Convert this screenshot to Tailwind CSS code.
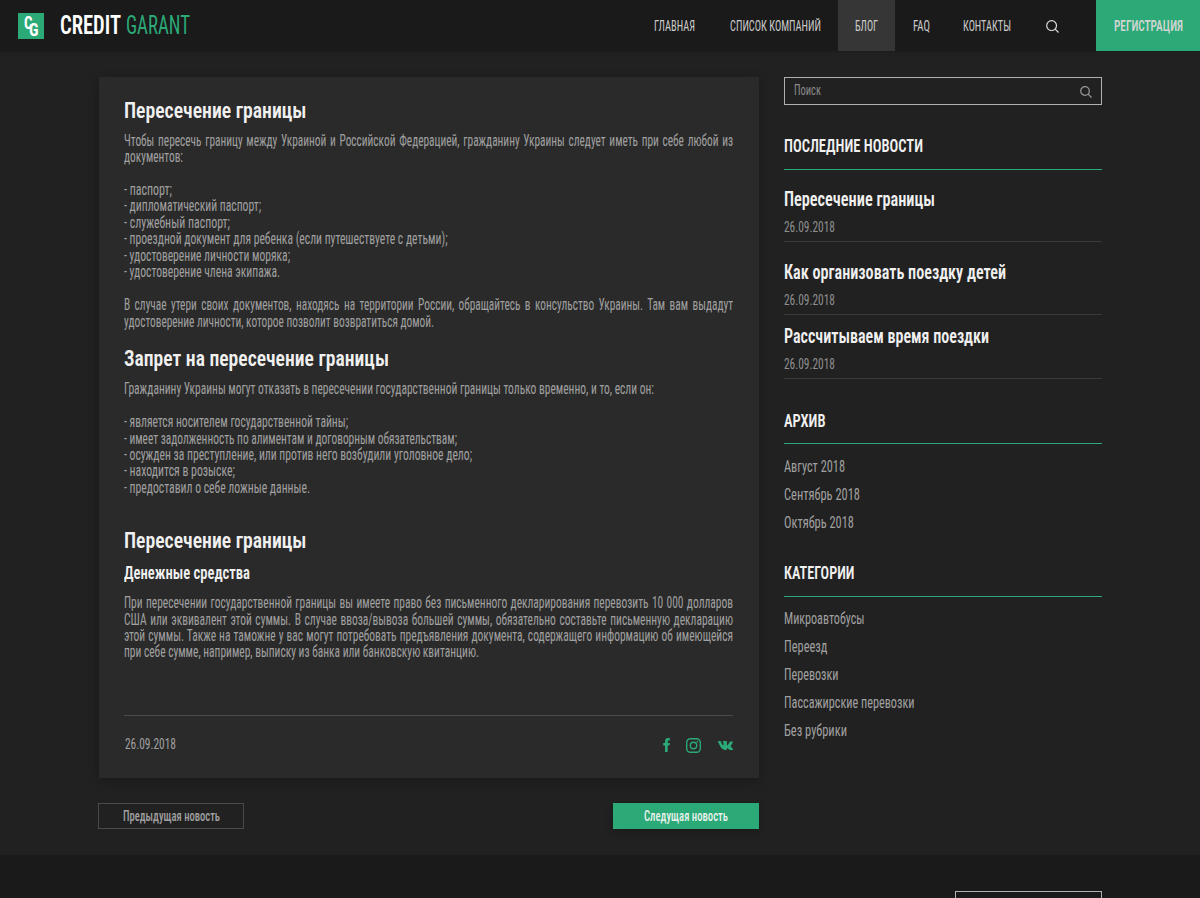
<!DOCTYPE html>
<html lang="ru">
<head>
<meta charset="utf-8">
<title>Credit Garant</title>
<script src="https://cdn.jsdelivr.net/npm/@tailwindcss/browser@4"></script>
</head>
<body class="bg-[#212121] font-['Roboto','Open_Sans',sans-serif] font-stretch-[75%] text-[#a0a0a0] overflow-hidden h-[898px]">
<header class="h-[51px] bg-[#1a1a1a] flex items-center shadow-[0_0_4px_rgba(0,0,0,0.25)]">
  <div class="relative ml-[18px] size-[26px] bg-[#2ba977] text-white font-bold text-[18px] leading-[13px]">
    <div data-fit class="absolute left-[6px] top-[3px] w-[8.5px]">C</div>
    <div data-fit class="absolute left-[11px] top-[10px] w-[9.5px]">G</div>
  </div>
  <div data-fit class="ml-[16px] mb-px w-[61px] text-[25.5px] leading-[50px] font-semibold text-white">CREDIT</div>
  <div data-fit class="ml-[5px] mb-px w-[64px] text-[25.5px] leading-[50px] font-[380] text-[#2ba977]">GARANT</div>
  <nav class="ml-auto h-full flex items-center text-[15.5px] leading-[52px] text-[#cacaca]">
    <a data-fit class="w-[41px]">ГЛАВНАЯ</a>
    <a data-fit class="ml-[35px] w-[91px]">СПИСОК КОМПАНИЙ</a>
    <div class="ml-[17px] h-full w-[57px] px-[17px] bg-[#363636]"><a data-fit class="block w-[23px]">БЛОГ</a></div>
    <a data-fit class="ml-[17.5px] w-[17px]">FAQ</a>
    <a data-fit class="ml-[33.5px] w-[48px]">КОНТАКТЫ</a>
    <svg class="ml-[35px] mt-[2px] size-[13px]" viewBox="0 0 13 13" fill="none" stroke="#dcdcdc" stroke-width="1.2"><circle cx="5.6" cy="5.6" r="4.9"/><path d="M9.2 9.2 12.5 12.5"/></svg>
    <div class="ml-[37px] h-full w-[104px] px-[17.5px] bg-[#2ba977]"><a data-fit class="block w-[69px] font-semibold text-[#cfd5d2]">РЕГИСТРАЦИЯ</a></div>
  </nav>
</header>

<div class="flex h-[804px] pl-[98px] pt-[26px]">
  <main class="w-[661px]">
    <article class="ml-px w-[660px] h-[701px] bg-[#2a2a2a] pl-[25px] pr-[26px] pt-[19.1px] shadow-[0_3px_10px_rgba(0,0,0,0.25)] text-[16.6px] leading-[16.45px]">
      <h2 data-fit class="w-[182.5px] text-[22.6px] leading-[30px] font-semibold text-[#f0f0f0]">Пересечение границы</h2>
      <div data-just class="mt-[6.5px]">
        <p data-full>Чтобы пересечь границу между Украиной и Российской Федерацией, гражданину Украины следует иметь при себе любой из</p>
        <p data-fit class="w-[59px]">документов:</p>
      </div>
      <div class="mt-[16.45px]">
        <p data-fit class="w-[48px]">- паспорт;</p>
        <p data-fit class="w-[137px]">- дипломатический паспорт;</p>
        <p data-fit class="w-[106px]">- служебный паспорт;</p>
        <p data-fit class="w-[323.5px]">- проездной документ для ребенка (если путешествуете с детьми);</p>
        <p data-fit class="w-[166px]">- удостоверение личности моряка;</p>
        <p data-fit class="w-[156px]">- удостоверение члена экипажа.</p>
      </div>
      <div data-just class="mt-[16.45px]">
        <p data-full>В случае утери своих документов, находясь на территории России, обращайтесь в консульство Украины. Там вам выдадут</p>
        <p data-fit class="w-[310px]">удостоверение личности, которое позволит возвратиться домой.</p>
      </div>
      <h2 data-fit class="mt-[13.8px] w-[265px] text-[22.6px] leading-[30px] font-semibold text-[#f0f0f0]">Запрет на пересечение границы</h2>
      <p data-fit class="mt-[7.4px] w-[530px]">Гражданину Украины могут отказать в пересечении государственной границы только временно, и то, если он:</p>
      <div class="mt-[16.45px]">
        <p data-fit class="w-[224px]">- является носителем государственной тайны;</p>
        <p data-fit class="w-[333px]">- имеет задолженность по алиментам и договорным обязательствам;</p>
        <p data-fit class="w-[348px]">- осужден за преступление, или против него возбудили уголовное дело;</p>
        <p data-fit class="w-[111px]">- находится в розыске;</p>
        <p data-fit class="w-[186px]">- предоставил о себе ложные данные.</p>
      </div>
      <h2 data-fit class="mt-[29.75px] w-[182.5px] text-[22.6px] leading-[30px] font-semibold text-[#f0f0f0]">Пересечение границы</h2>
      <h3 data-fit class="mt-[4.6px] w-[126px] text-[18px] leading-[24px] font-semibold text-[#f0f0f0]">Денежные средства</h3>
      <div data-just class="mt-[10.4px]">
        <p data-full>При пересечении государственной границы вы имеете право без письменного декларирования перевозить 10 000 долларов</p>
        <p data-full>США или эквивалент этой суммы. В случае ввоза/вывоза большей суммы, обязательно составьте письменную декларацию</p>
        <p data-full>этой суммы. Также на таможне у вас могут потребовать предъявления документа, содержащего информацию об имеющейся</p>
        <p data-fit class="w-[355px]">при себе сумме, например, выписку из банка или банковскую квитанцию.</p>
      </div>
      <footer class="mt-[54.1px] flex h-[61px] items-center border-t border-[#4a4a4a] text-[14.5px] text-[#a0a0a0]">
        <time data-fit class="ml-px mb-[1px] w-[51px]">26.09.2018</time>
        <svg class="ml-auto mb-[2px] w-[7px] h-[14px]" viewBox="0 0 7 14" fill="#2ba977"><path d="M2 14V7.5H.2V5H2V3.4C2 1.2 3.2 0 5 0h1.8v2.5H5.6c-.6 0-.9.3-.9.9V5h2.1l-.3 2.500H4.700V14z"/></svg>
        <svg class="ml-[16px] size-[15px]" viewBox="0 0 15 15" fill="none" stroke="#2ba977" stroke-width="1.4"><rect x=".7" y=".7" width="13.600" height="13.600" rx="3.800"/><circle cx="7.500" cy="7.500" r="3.200"/><circle cx="11.400" cy="3.600" r=".9" fill="#2ba977" stroke="none"/></svg>
        <svg class="ml-[17px] w-[15px] h-[9px]" viewBox="0 0 15 9" fill="#2ba977"><path d="M7.300 9h.9c.5-.1.500-.3.500-.8 0-.9.500-1.500 1.300-.7.9.9 1.200 1.500 2.200 1.500h2c.8 0 1-.5.600-1.200-.4-.700-1.100-1.400-1.900-2.200-.4-.4-.3-.6 0-1.100.7-1 1.600-2.200 1.900-3.300.2-.5 0-.8-.5-.8h-1.900c-.5 0-.7.2-.9.600-.5 1.200-1.100 2.200-1.800 2.900-.5.500-.8.300-.8-.4V1c0-.7-.2-1-.8-1H5.300c-.7 0-.8.400-.4.800.5.500.6 1 .6 2.200 0 1.200-.3 1.400-.8.900C4 3.200 3.400 1.900 3 .7 2.800.2 2.600 0 2.100 0H.5C0 0-.1.300.1.800c.6 1.700 1.600 3.900 2.900 5.700C4.200 8.100 5.500 9 7.300 9z"/></svg>
      </footer>
    </article>
    <div class="mt-[25px] flex justify-between text-[14.5px] leading-[25px]">
      <a class="h-[26px] w-[146px] border border-[#4a4a4a] px-[23.5px]"><span data-fit class="block w-[97px] font-medium">Предыдущая новость</span></a>
      <a class="h-[26px] w-[146px] bg-[#2ba977] px-[30.5px] pt-px shadow-[0_3px_8px_rgba(0,0,0,0.2)]"><span data-fit class="block w-[84px] font-medium text-[#e8f2ed]">Следущая новость</span></a>
    </div>
  </main>

  <aside class="ml-[25px] w-[317.5px] text-[16.6px] leading-[20px]">
    <div class="flex h-[28px] items-center border border-[#b0b0b0] pl-[9px] pr-[9px] text-[14.5px] leading-[26px] text-[#8c8c8c]">
      <span data-fit class="w-[27px]">Поиск</span>
      <svg class="ml-auto mt-px size-[12px]" viewBox="0 0 12 12" fill="none" stroke="#9a9a9a" stroke-width="1.2"><circle cx="5" cy="5" r="4.3"/><path d="M8.2 8.2 11.5 11.5"/></svg>
    </div>
    <h4 data-fit class="mt-[31px] w-[139px] text-[17.8px] font-semibold text-[#f0f0f0]">ПОСЛЕДНИЕ НОВОСТИ</h4>
    <div class="mt-[13px] border-t border-[#2ba977]"></div>
    <div class="h-[72px] border-b border-[#3a3a3a] pt-[20.2px]">
      <h5 data-fit class="w-[151px] text-[19.5px] font-semibold text-[#f0f0f0]">Пересечение границы</h5>
      <time data-fit class="mt-[8px] block w-[51px] text-[14.5px] text-[#8f8f8f]">26.09.2018</time>
    </div>
    <div class="h-[73px] border-b border-[#3a3a3a] pt-[21.3px]">
      <h5 data-fit class="w-[222px] text-[19.5px] font-semibold text-[#f0f0f0]">Как организовать поездку детей</h5>
      <time data-fit class="mt-[8px] block w-[51px] text-[14.5px] text-[#8f8f8f]">26.09.2018</time>
    </div>
    <div class="h-[64px] border-b border-[#3a3a3a] pt-[12.3px]">
      <h5 data-fit class="w-[205px] text-[19.5px] font-semibold text-[#f0f0f0]">Рассчитываем время поездки</h5>
      <time data-fit class="mt-[8px] block w-[51px] text-[14.5px] text-[#8f8f8f]">26.09.2018</time>
    </div>
    <h4 data-fit class="mt-[31.5px] w-[41.5px] text-[17.8px] font-semibold text-[#f0f0f0]">АРХИВ</h4>
    <div class="mt-[12.5px] border-t border-[#2ba977]"></div>
    <ul class="mt-[13.4px] flex flex-col gap-[8px]">
      <li data-fit class="w-[61px]">Август 2018</li>
      <li data-fit class="w-[76px]">Сентябрь 2018</li>
      <li data-fit class="w-[70px]">Октябрь 2018</li>
    </ul>
    <h4 data-fit class="mt-[29.3px] w-[70.5px] text-[17.8px] font-semibold text-[#f0f0f0]">КАТЕГОРИИ</h4>
    <div class="mt-[13.3px] border-t border-[#2ba977]"></div>
    <ul class="mt-[12.5px] flex flex-col gap-[8px]">
      <li data-fit class="w-[80.5px]">Микроавтобусы</li>
      <li data-fit class="w-[43.5px]">Переезд</li>
      <li data-fit class="w-[54.5px]">Перевозки</li>
      <li data-fit class="w-[130.5px]">Пассажирские перевозки</li>
      <li data-fit class="w-[63px]">Без рубрики</li>
    </ul>
  </aside>
</div>

<footer class="h-[43px] bg-[#1a1a1a] pl-[955px] pt-[36px]">
  <div class="h-[7px] w-[147px] border border-b-0 border-[#b0b0b0]"></div>
</footer>

<script>
// Wrap the text of each fitted line in a span that can be condensed.
document.querySelectorAll('[data-fit],[data-full]').forEach(el => {
  const s = document.createElement('span');
  s.className = 'inline-block origin-left whitespace-nowrap align-top';
  s.append(...el.childNodes);
  el.append(s);
});
function fit() {
  // Condense each line horizontally to the width of its box.
  document.querySelectorAll('[data-fit]').forEach(el => {
    const s = el.firstElementChild;
    s.style.transform = 'none';
    el.k = el.getBoundingClientRect().width / s.getBoundingClientRect().width;
    s.style.transform = `scaleX(${el.k})`;
  });
  // Justified lines share the ratio of their paragraph's last line.
  document.querySelectorAll('[data-just]').forEach(box => {
    const k = box.lastElementChild.k;
    box.querySelectorAll('[data-full]').forEach(el => {
      const s = el.firstElementChild;
      s.style.transform = 'none';
      s.style.wordSpacing = '0px';
      const target = el.getBoundingClientRect().width;
      const natural = s.getBoundingClientRect().width;
      const gaps = s.textContent.split(' ').length - 1;
      s.style.wordSpacing = `${(target / k - natural) / gaps}px`;
      s.style.transform = `scaleX(${k})`;
    });
  });
}
fit();
addEventListener('load', fit);
document.fonts.ready.then(fit);
new ResizeObserver(fit).observe(document.querySelector('h2'));
</script>
</body>
</html>
